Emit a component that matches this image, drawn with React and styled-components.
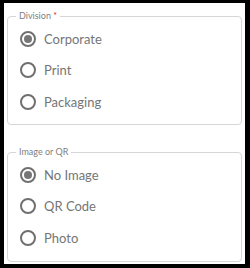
import React, { useState } from 'react';
import styled, { createGlobalStyle } from 'styled-components';

const GlobalStyle = createGlobalStyle`
  html, body {
    margin: 0;
    padding: 0;
    background: #000;
  }
  body {
    font-family: Lato, 'Open Sans', sans-serif;
  }
`;

const Panel = styled.div`
  box-sizing: border-box;
  margin: 3px 5px 0 4px;
  width: 241px;
  height: 261px;
  background: #fff;
  padding: 7px 3px 0 3px;
  display: flex;
  flex-direction: column;
  gap: 21px;
`;

const Group = styled.fieldset`
  box-sizing: border-box;
  margin: 0;
  width: 235px;
  height: ${(p) => p.$height}px;
  padding: 1px 12px 0 12px;
  border: 1px solid #d6d6d6;
  border-radius: 4px;
  display: flex;
  flex-direction: column;
`;

const Legend = styled.legend`
  margin-left: -4px;
  padding: 0 3px;
  font-size: 9px;
  line-height: 12px;
  color: #808080;
  span {
    color: #d32f2f;
  }
`;

const Option = styled.label`
  display: flex;
  align-items: center;
  height: 31.5px;
  gap: 8px;
  cursor: pointer;
  font-size: 13px;
  color: #757575;
`;

const Ring = styled.span`
  box-sizing: border-box;
  width: 16px;
  height: 16px;
  border-radius: 50%;
  border: 2px solid #707070;
  display: flex;
  align-items: center;
  justify-content: center;
  flex-shrink: 0;
  &::after {
    content: '';
    width: 8px;
    height: 8px;
    border-radius: 50%;
    background: #767676;
    display: ${(p) => (p.$checked ? 'block' : 'none')};
  }
`;

function RadioGroup({ label, required, options, height }) {
  const [value, setValue] = useState(options[0]);
  return (
    <Group $height={height}>
      <Legend>
        {label}
        {required && <span> *</span>}
      </Legend>
      {options.map((o) => (
        <Option key={o} onClick={() => setValue(o)}>
          <Ring $checked={value === o} />
          {o}
        </Option>
      ))}
    </Group>
  );
}

export default function App() {
  return (
    <>
      <GlobalStyle />
      <Panel>
        <RadioGroup
          label="Division"
          required
          height={115}
          options={['Corporate', 'Print', 'Packaging']}
        />
        <RadioGroup
          label="Image or QR"
          height={116}
          options={['No Image', 'QR Code', 'Photo']}
        />
      </Panel>
    </>
  );
}
